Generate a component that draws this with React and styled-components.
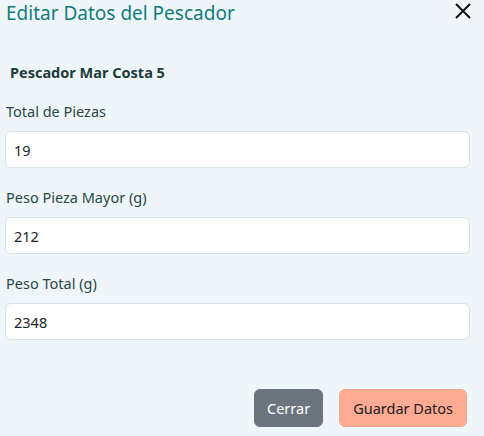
import React, { useState } from "react"
import styled, { createGlobalStyle } from "styled-components"

const GlobalStyle = createGlobalStyle`
  html, body {
    margin: 0;
    padding: 0;
    background: #eef6f9;
  }
  body {
    font-family: "Noto Sans", "Open Sans", sans-serif;
  }
`

const Fields = [
  { name: "Total de Piezas", key: "piezas" },
  { name: "Peso Pieza Mayor (g)", key: "mayor" },
  { name: "Peso Total (g)", key: "total" },
]

const App = () => {
  const [values, setValues] = useState({ piezas: "19", mayor: "212", total: "2348" })

  return (
    <>
      <GlobalStyle />
      <Modal>
        <Header>
          <Title>Editar Datos del Pescador</Title>
          <CloseButton aria-label="Cerrar">
            <svg width="18" height="18" viewBox="0 0 18 18">
              <path d="M2 2 L16 16 M16 2 L2 16" stroke="#111" strokeWidth="2" fill="none" />
            </svg>
          </CloseButton>
        </Header>
        <Body>
          <Name>Pescador Mar Costa 5</Name>
          {Fields.map(field => (
            <Field key={field.key}>
              <Label>{field.name}</Label>
              <Input
                value={values[field.key]}
                onChange={e => setValues({ ...values, [field.key]: e.target.value })}
              />
            </Field>
          ))}
        </Body>
        <Footer>
          <Button>Cerrar</Button>
          <Button primary>Guardar Datos</Button>
        </Footer>
      </Modal>
    </>
  )
}

export default App

const Modal = styled.div`
  width: 484px;
  height: 436px;
  box-sizing: border-box;
  padding: 0 14px 0 5px;
  display: flex;
  flex-direction: column;
`
const Header = styled.div`
  display: flex;
  justify-content: space-between;
  align-items: flex-start;
  height: 61px;
`
const Title = styled.h2`
  margin: 0 0 0 1px;
  font-size: 19px;
  line-height: 26px;
  font-weight: 400;
  color: #127b7c;
`
const CloseButton = styled.button`
  border: none;
  background: none;
  padding: 0;
  margin: 2px -2px 0 0;
  width: 18px;
  height: 18px;
  display: flex;
`
const Body = styled.div`
  display: flex;
  flex-direction: column;
`
const Name = styled.h4`
  margin: 0 0 17px 5px;
  font-size: 14.5px;
  line-height: 22px;
  font-weight: 700;
  color: #1c3b3c;
`
const Field = styled.div`
  display: flex;
  flex-direction: column;
  gap: 9px;
  margin-bottom: 18px;
`
const Label = styled.label`
  font-size: 14.5px;
  line-height: 22px;
  color: #2b4647;
  margin-left: 1px;
`
const Input = styled.input`
  box-sizing: border-box;
  height: 37px;
  width: 100%;
  border: 1px solid #d8e3e6;
  border-radius: 6px;
  background: #fff;
  padding: 0 8px;
  font-family: inherit;
  font-size: 14.5px;
  color: #212529;
  outline: none;
`
const Footer = styled.div`
  display: flex;
  justify-content: flex-end;
  gap: 16px;
  margin-top: auto;
  padding: 0 3px 9px 0;
`
const Button = styled.button`
  height: 38px;
  padding: 0 ${p => (p.primary ? "13px" : "12px")};
  border-radius: 6px;
  font-family: inherit;
  font-size: 14.5px;
  border: 1px solid ${p => (p.primary ? "#f8a78d" : "#6c757d")};
  background: ${p => (p.primary ? "#ffab93" : "#6c757d")};
  color: ${p => (p.primary ? "#222" : "#fff")};
`
